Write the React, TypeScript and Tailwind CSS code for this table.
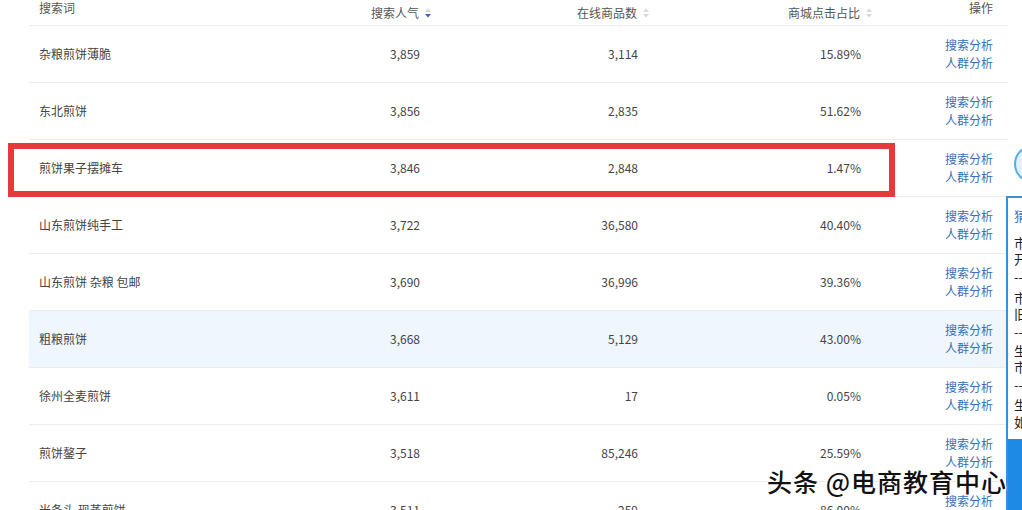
const FONT = { fontFamily: '"Noto Sans CJK SC", "Noto Sans", sans-serif' };

type Row = { word: string; hot: string; goods: string; ratio: string };

const rows: Row[] = [
  { word: "杂粮煎饼薄脆", hot: "3,859", goods: "3,114", ratio: "15.89%" },
  { word: "东北煎饼", hot: "3,856", goods: "2,835", ratio: "51.62%" },
  { word: "煎饼果子摆摊车", hot: "3,846", goods: "2,848", ratio: "1.47%" },
  { word: "山东煎饼纯手工", hot: "3,722", goods: "36,580", ratio: "40.40%" },
  { word: "山东煎饼 杂粮 包邮", hot: "3,690", goods: "36,996", ratio: "39.36%" },
  { word: "粗粮煎饼", hot: "3,668", goods: "5,129", ratio: "43.00%" },
  { word: "徐州全麦煎饼", hot: "3,611", goods: "17", ratio: "0.05%" },
  { word: "煎饼鏊子", hot: "3,518", goods: "85,246", ratio: "25.59%" },
  { word: "米条头 现蒸煎饼", hot: "3,511", goods: "259", ratio: "86.00%" },
];

const SortIcon = ({ active }: { active?: boolean }) => (
  <svg width="6" height="10" viewBox="0 0 6 10" className="ml-[6px] shrink-0">
    <path d="M0 4 L3 0.5 L6 4 Z" fill="#d3d7de" />
    <path d="M0 6 L3 9.5 L6 6 Z" fill={active ? "#3c62c4" : "#d3d7de"} />
  </svg>
);

const cols = "grid grid-cols-[191px_214px_218px_223px_133px]";

const SidePanel = () => (
  <>
    {/* speech bubble peeking in */}
    <div className="absolute left-[1014px] top-[145px] h-[38px] w-[38px] rounded-full border-2 border-[#5aaee6] bg-[#e3f1fc]" />
    {/* right helper panel */}
    <div className="absolute left-[1006px] top-[196px] h-[320px] w-[220px] border-2 border-[#3b8fd4] bg-white">
      <div className="h-[241px] pl-[6px] pt-[9px] text-[13px] text-[#222]">
        <div className="leading-[17px] text-[#2f74c0]">猜你想问</div>
        <div className="mt-[11px] leading-[16px]">
          <div>市场上的煎饼</div>
          <div>开店需要什么</div>
        </div>
        <div className="mt-[1px] leading-[17px]">--------</div>
        <div className="mt-[5px] leading-[16px]">
          <div>市面上的煎饼</div>
          <div>旧款怎么处理</div>
        </div>
        <div className="mt-[1px] leading-[17px]">--------</div>
        <div className="mt-[3px] leading-[16px]">
          <div>生意好不好做</div>
          <div>市场前景如何</div>
        </div>
        <div className="mt-[1px] leading-[17px]">--------</div>
        <div className="mt-[3px] leading-[17px]">
          <div>生产成本多少</div>
          <div>如何开始经营</div>
        </div>
      </div>
      <div className="h-[80px] bg-[#1f8ae6]" />
    </div>
  </>
);

export default function App() {
  return (
    <div className="relative h-[510px] w-[1022px] overflow-hidden bg-white" style={FONT}>
      <div className="ml-[29px] w-[979px] text-[12px]">
        {/* header */}
        <div className={`${cols} h-[25px] leading-[15px] text-[#555]`}>
          <div className="pl-[10px]">搜索词</div>
          <div className="flex items-center justify-end pr-[3px]">
            搜索人气
            <SortIcon active />
          </div>
          <div className="flex items-center justify-end pr-[3px]">
            在线商品数
            <SortIcon />
          </div>
          <div className="flex items-center justify-end pr-[3px]">
            商城点击占比
            <SortIcon />
          </div>
          <div className="pr-[15px] text-right">操作</div>
        </div>

        {/* body */}
        {rows.map((r, i) => (
          <div
            key={i}
            className={`${cols} h-[57px] border-t border-[#ececec] text-[#444] ${
              i === 5 ? "bg-[#eff6fe]" : ""
            }`}
          >
            <div className="flex items-center pl-[10px]">{r.word}</div>
            <div className="flex items-center justify-end pr-[14px]">{r.hot}</div>
            <div className="flex items-center justify-end pr-[14px]">{r.goods}</div>
            <div className="flex items-center justify-end pr-[14px]">{r.ratio}</div>
            <div className="flex flex-col items-end justify-center pr-[15px] leading-[18px] text-[#3a6db6]">
              <span>搜索分析</span>
              <span>人群分析</span>
            </div>
          </div>
        ))}
      </div>

      {/* red annotation box */}
      <div className="absolute left-[8px] top-[143px] h-[54px] w-[887px] border-[6px] border-[#e5393b]" />

      <SidePanel />

      {/* watermark */}
      <div
        className="absolute left-[767px] top-[465px] text-[25px] font-medium leading-[32px] tracking-[1px] text-[#111]"
        style={{
          textShadow:
            "1px 1px 0 #fff, -1px -1px 0 #fff, 1px -1px 0 #fff, -1px 1px 0 #fff, 0 0 3px rgba(255,255,255,0.9)",
        }}
      >
        头条 @电商教育中心
      </div>
    </div>
  );
}
